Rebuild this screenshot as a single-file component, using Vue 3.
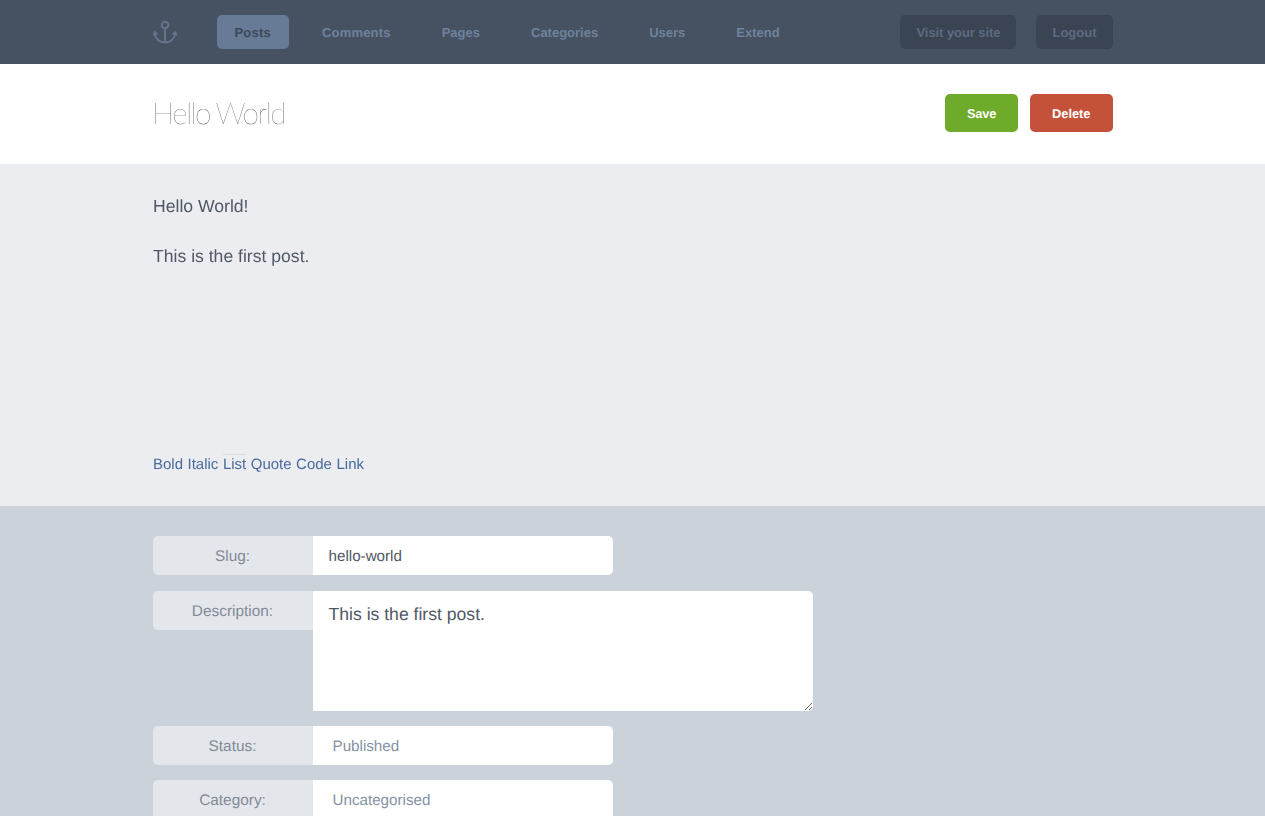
<script setup>
const links = [
  { label: 'Posts', active: true },
  { label: 'Comments' },
  { label: 'Pages' },
  { label: 'Categories' },
  { label: 'Users' },
  { label: 'Extend' }
]
const tools = ['Bold', 'Italic', 'List', 'Quote', 'Code', 'Link']
</script>

<template>
  <div class="page">
    <header class="top">
      <div class="wrap top-row">
        <svg class="logo" width="25" height="24" viewBox="0 0 25 24" fill="none" stroke="#64748c" stroke-width="2">
          <circle cx="12" cy="5" r="3.300" />
          <path d="M12 8.300V22.500" />
          <path d="M1.800 13.500c.4 5.300 4.700 9 10.200 9s9.800-3.700 10.200-9" />
          <path d="M.3 15.500l1.300-3.300 2.800 2.100" stroke-width="1.700" />
          <path d="M23.700 15.500l-1.300-3.300-2.800 2.100" stroke-width="1.700" />
        </svg>
        <nav class="nav">
          <a v-for="l in links" :key="l.label" class="nav-link" :class="[l.label.toLowerCase(), { active: l.active }]">{{ l.label }}</a>
        </nav>
        <div class="side">
          <a class="dark-btn visit">Visit your site</a>
          <a class="dark-btn logout">Logout</a>
        </div>
      </div>
    </header>

    <section class="title-bar">
      <div class="wrap title-row">
        <h1>Hello World</h1>
        <div class="actions">
          <button class="btn save">Save</button>
          <button class="btn delete">Delete</button>
        </div>
      </div>
    </section>

    <section class="editor">
      <div class="wrap">
        <div class="body-text">
          <p>Hello World!</p>
          <p>This is the first post.</p>
        </div>
        <div class="tools">
          <a v-for="t in tools" :key="t" class="tool" :class="{ marked: t === 'List' }">{{ t }}</a>
        </div>
      </div>
    </section>

    <section class="meta">
      <div class="wrap">
        <div class="field">
          <label>Slug:</label>
          <input class="slug" value="hello-world" />
        </div>
        <div class="field desc">
          <label>Description:</label>
          <textarea>This is the first post.</textarea>
        </div>
        <div class="field status">
          <label>Status:</label>
          <div class="choice">Published</div>
        </div>
        <div class="field category">
          <label>Category:</label>
          <div class="choice">Uncategorised</div>
        </div>
      </div>
    </section>
  </div>
</template>

<style>
html, body { margin: 0; overflow: hidden; height: 816px; }
</style>

<style scoped>
.page {
  font-family: "Liberation Sans", Arial, sans-serif;
  color: #4a5260;
  background: #cbd2da;
  text-rendering: geometricPrecision;
}
.wrap { width: 960px; margin: 0 auto; }

.top { background: #465261; height: 64px; }
.top-row { display: flex; align-items: center; height: 64px; }
.logo { width: 25px; height: 24px; margin-right: 39px; flex: none; }
.nav { display: flex; gap: 15px; flex: 1; }
.nav-link {
  display: block;
  height: 34px;
  line-height: 35px;
  padding: 0 18px;
  border-radius: 5px;
  font-size: 13px;
  font-weight: 700;
  color: #6f829d;
}
.posts, .comments { letter-spacing: 0.2px; }
.active { background: #677a96; color: #3c4859; }
.side { display: flex; gap: 20px; }
.dark-btn {
  display: block;
  height: 34px;
  line-height: 35px;
  padding: 0 16px;
  border-radius: 5px;
  background: #3a4453;
  color: #5d6b80;
  font-size: 13px;
  font-weight: 700;
}
.visit { letter-spacing: -0.07px; }

.title-bar { background: #fff; height: 100px; }
.title-row { display: flex; align-items: flex-start; justify-content: space-between; height: 100px; }
h1 {
  margin: 32px 0 0 -1px;
  font-family: Lato, Roboto, sans-serif;
  font-weight: 100;
  font-size: 30px;
  line-height: 34px;
  letter-spacing: -1.75px;
  color: #2f3640;
  will-change: transform;
}
.actions { display: flex; gap: 12px; margin-top: 30px; }
.btn {
  height: 38px;
  padding: 0 22px;
  border: 0;
  border-radius: 5px;
  color: #fff;
  font-family: inherit;
  font-size: 12.8px;
  font-weight: 700;
  text-rendering: geometricPrecision;
}
.save { background: #6eab2a; letter-spacing: -0.2px; }
.delete { background: #c4523a; }

.editor { background: #ebedf1; height: 342px; }
.editor .wrap { display: flex; flex-direction: column; height: 342px; }
.body-text { flex: 1; padding-top: 30px; font-size: 17.6px; line-height: 25px; color: #505865; will-change: transform; }
.body-text p { margin: 0 0 25px; }
.tools { display: flex; gap: 4.5px; margin-bottom: 31px; font-size: 15px; line-height: 20px; color: #4a6a9e; will-change: transform; }
.tool { position: relative; }
.marked::before {
  content: "";
  position: absolute;
  left: 0;
  right: 0;
  top: -1px;
  height: 1px;
  background: #d9dde3;
}

.meta { height: 310px; padding-top: 30px; box-sizing: border-box; overflow: hidden; }
.field { display: flex; align-items: flex-start; margin-bottom: 16px; }
label {
  width: 160px;
  height: 39px;
  line-height: 41px;
  text-align: center;
  font-size: 15.4px;
  color: #838a96;
  background: #e3e6eb;
  border-radius: 5px 0 0 5px;
  flex: none;
}
.slug, .choice {
  width: 300px;
  height: 39px;
  box-sizing: border-box;
  border: 0;
  outline: 0;
  border-radius: 0 5px 5px 0;
  background: #fff;
  font-family: inherit;
  font-size: 15.2px;
  text-rendering: geometricPrecision;
}
.slug { padding: 1px 16px 0; color: #505865; }
.choice { padding: 0 20px; line-height: 41px; color: #8592a6; }
textarea {
  display: block;
  width: 500px;
  height: 120px;
  box-sizing: border-box;
  border: 0;
  outline: 0;
  padding: 13px 16px;
  border-radius: 0 5px 5px 0;
  background: #fff;
  color: #505865;
  font-family: inherit;
  font-size: 17.6px;
  line-height: 21px;
  text-rendering: geometricPrecision;
}
.desc { margin-bottom: 15px; }
.status { margin-bottom: 15px; }
</style>
